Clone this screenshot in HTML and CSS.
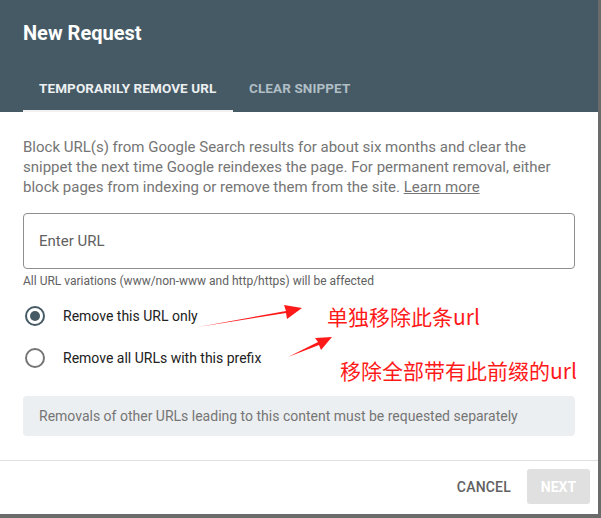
FILE: index.html
```html
<!DOCTYPE html>
<html>
<head>
<meta charset="utf-8">
<link rel="stylesheet" href="styles.css">
</head>
<body>
<div class="dialog">
  <header class="header">
    <h1 class="title">New Request</h1>
    <nav class="tabs">
      <div class="tab active">TEMPORARILY REMOVE URL</div>
      <div class="tab">CLEAR SNIPPET</div>
    </nav>
  </header>
  <main class="body">
    <p class="desc">Block URL(s) from Google Search results for about six months and clear the snippet the next time Google reindexes the page. For permanent removal, either block pages from indexing or remove them from the site. <span class="link">Learn more</span></p>
    <div class="input">Enter URL</div>
    <div class="helper">All URL variations (www/non-www and http/https) will be affected</div>
    <div class="radios">
      <label class="radio-row"><span class="radio checked"></span><span class="radio-label">Remove this URL only</span></label>
      <label class="radio-row"><span class="radio"></span><span class="radio-label">Remove all URLs with this prefix</span></label>
    </div>
    <div class="info">Removals of other URLs leading to this content must be requested separately</div>
  </main>
  <footer class="footer">
    <span class="btn-cancel">CANCEL</span>
    <span class="btn-next">NEXT</span>
  </footer>

  <svg class="arrows" width="600" height="520" viewBox="0 0 600 520">
    <polygon points="198,327 286,311 284,305 302,308 287,319 286,313" fill="#ff1a1a"/>
    <polygon points="288,357 318,342 315,338 332,337 321,350 319,345" fill="#ff1a1a"/>
  </svg>
  <div class="note note1">单独移除此条url</div>
  <div class="note note2">移除全部带有此前缀的url</div>
</div>
</body>
</html>
```
FILE: styles.css
```css
* { box-sizing: border-box; }
html, body { margin: 0; padding: 0; }
body {
  background: #6b6b6b;
  width: 601px;
  height: 518px;
  font-family: Roboto, "Noto Sans", "Liberation Sans", sans-serif;
  overflow: hidden;
}
.dialog {
  position: relative;
  width: 598px;
  height: 514px;
  background: #fff;
  display: flex;
  flex-direction: column;
}
.header {
  background: #455a64;
  height: 112px;
  padding: 0 0 0 23px;
  display: flex;
  flex-direction: column;
}
.title {
  margin: 0;
  padding-top: 21px;
  height: 65px;
  font-size: 20px;
  font-weight: 700;
  color: #fff;
  line-height: 24px;
}
.tabs {
  display: flex;
  height: 47px;
}
.tab {
  font-size: 13.5px;
  font-weight: 700;
  letter-spacing: 0.1px;
  color: #b0bec5;
  padding: 0 16px;
  line-height: 47px;
  border-bottom: 2px solid transparent;
}
.tab.active {
  color: #eceff1;
  border-bottom-color: #f1f1f1;
  width: 210px;
}
.body {
  padding: 0 23px;
  flex: 1;
}
.desc {
  margin: 25px 0 0;
  width: 535px;
  font-size: 15px;
  line-height: 20px;
  color: #757575;
}
.link {
  color: #757575;
  text-decoration: underline;
}
.input {
  margin-top: 16px;
  height: 56px;
  border: 1px solid #8e8e8e;
  border-radius: 4px;
  padding: 0 15px;
  display: flex;
  align-items: center;
  font-size: 15px;
  color: #616161;
}
.helper {
  margin-top: 5px;
  font-size: 12px;
  color: #616161;
  line-height: 14px;
}
.radios {
  margin-top: 18px;
  display: flex;
  flex-direction: column;
  gap: 22px;
}
.radio-row {
  display: flex;
  align-items: center;
  height: 20px;
}
.radio {
  width: 20px;
  height: 20px;
  border: 2px solid #757575;
  border-radius: 50%;
  margin-left: 2px;
  display: flex;
  align-items: center;
  justify-content: center;
}
.radio.checked { border-color: #455a64; }
.radio.checked::after {
  content: "";
  width: 10px;
  height: 10px;
  border-radius: 50%;
  background: #455a64;
}
.radio-label {
  margin-left: 18px;
  font-size: 14px;
  color: #212121;
}
.info {
  margin-top: 28px;
  height: 40px;
  background: #eceff1;
  border-radius: 4px;
  padding: 0 16px;
  display: flex;
  align-items: center;
  font-size: 14px;
  color: #757575;
}
.footer {
  border-top: 1px solid #e0e0e0;
  height: 54px;
  display: flex;
  align-items: center;
  justify-content: flex-end;
  padding-right: 8px;
  gap: 16px;
}
.btn-cancel {
  font-size: 14px;
  font-weight: 500;
  color: #616161;
  letter-spacing: 0.2px;
  margin-top: -2px;
}
.btn-next {
  width: 63px;
  height: 35px;
  background: #e0e0e0;
  border-radius: 3px;
  color: #fff;
  font-size: 14px;
  font-weight: 700;
  display: flex;
  align-items: center;
  justify-content: center;
  margin-top: -2px;
}
.arrows {
  position: absolute;
  left: 0;
  top: 0;
  pointer-events: none;
}
.note {
  position: absolute;
  color: #ff1a1a;
  font-size: 21px;
  line-height: 26px;
  font-family: "Noto Sans CJK SC", sans-serif;
}
.note1 { left: 327px; top: 303px; }
.note2 { left: 340px; top: 357px; }
```
